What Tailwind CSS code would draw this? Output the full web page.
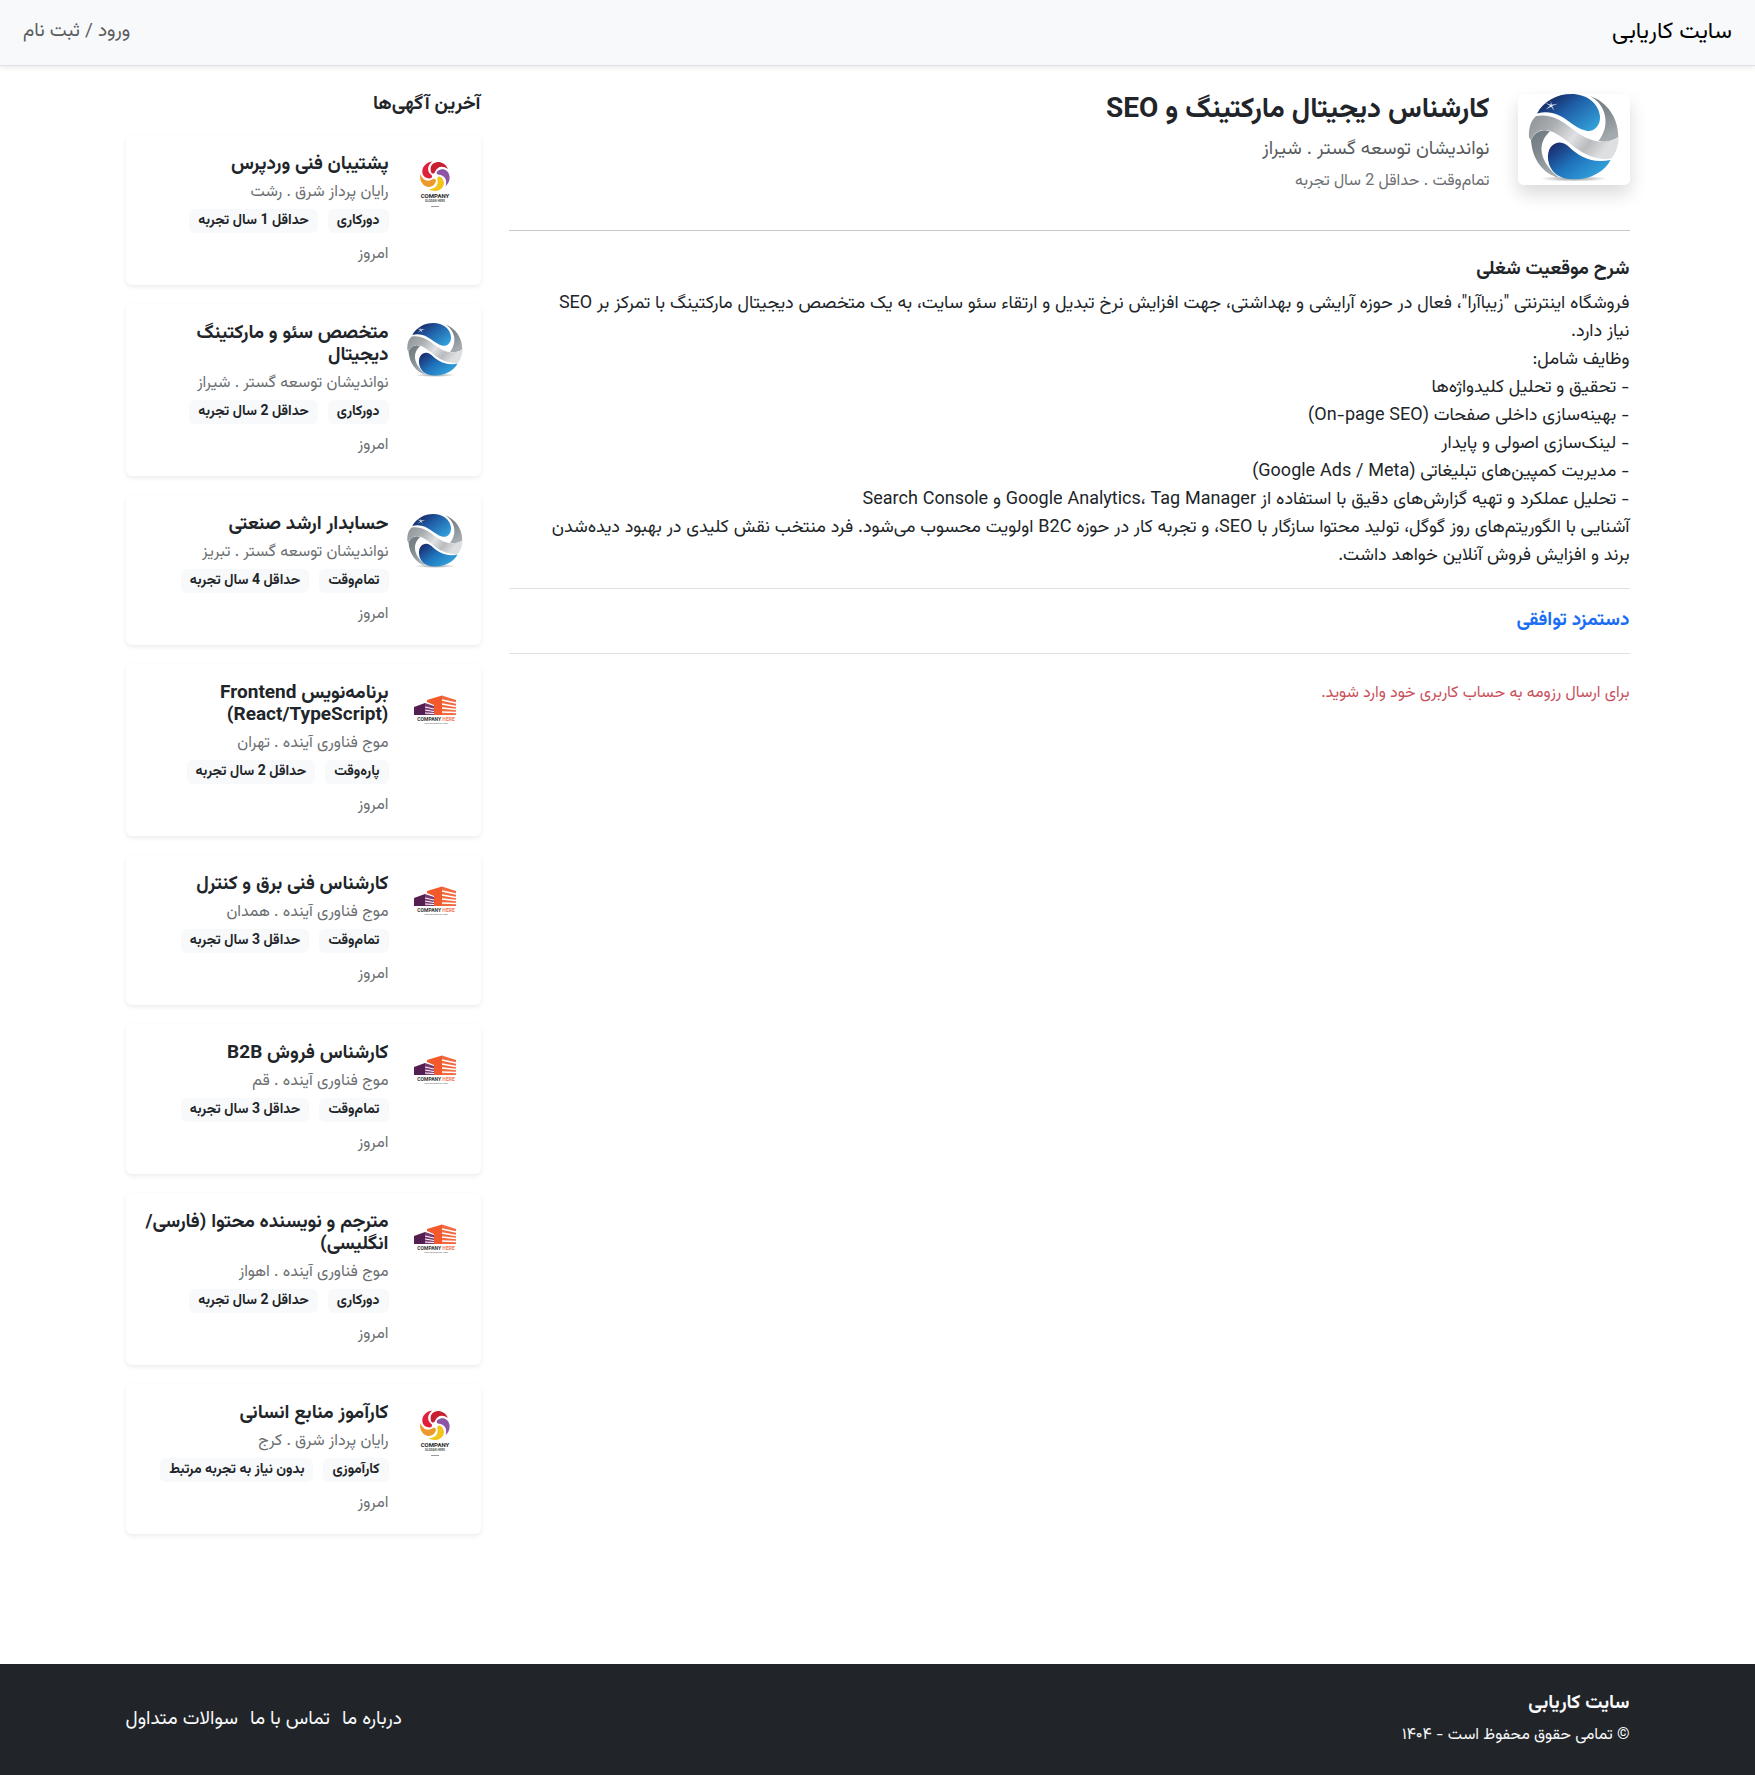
<!DOCTYPE html>
<html lang="fa" dir="rtl">
<head>
<meta charset="utf-8">
<meta name="viewport" content="width=device-width, initial-scale=1">
<title>سایت کاریابی</title>
<script src="https://cdn.jsdelivr.net/npm/@tailwindcss/browser@4"></script>
</head>
<body class="flex min-h-screen flex-col bg-white font-[Vazirmatn,Roboto,'Noto_Sans_Arabic','DejaVu_Sans',sans-serif] text-[19px] leading-7 text-[#212529]">

<svg class="absolute size-0" aria-hidden="true">
  <defs>
    <linearGradient id="blue1" x1="0" y1="0.1" x2="1" y2="0.9"><stop offset="0.1" stop-color="#17265f"/><stop offset="0.45" stop-color="#1f5fa8"/><stop offset="1" stop-color="#35a5dd"/></linearGradient>
    <linearGradient id="blue2" x1="0" y1="0" x2="1" y2="0.8"><stop offset="0.1" stop-color="#1b2f72"/><stop offset="0.5" stop-color="#1f74bc"/><stop offset="1" stop-color="#36a9e1"/></linearGradient>
    <linearGradient id="band" x1="0" y1="0" x2="1" y2="0.4"><stop offset="0" stop-color="#8b9195"/><stop offset="0.3" stop-color="#a9adb0"/><stop offset="0.6" stop-color="#e0e1e3"/><stop offset="0.8" stop-color="#b9bbbe"/><stop offset="1" stop-color="#dedfe1"/></linearGradient>
    <linearGradient id="gray" x1="0" y1="0" x2="0.4" y2="1"><stop offset="0" stop-color="#6f7a80"/><stop offset="0.5" stop-color="#7f898e"/><stop offset="1" stop-color="#a4aaae"/></linearGradient>
    <radialGradient id="floor"><stop offset="0" stop-color="#8f9498"/><stop offset="1" stop-color="#ffffff"/></radialGradient>
    <path id="petal" d="M-4 -4C-7 -15 8 -18 13 -7C7 -11 2 -9 0 -4C-1 -2 -3 -2 -4 -4Z"/>
  </defs>
  <symbol id="globe" viewBox="85 70 335 272" preserveAspectRatio="xMidYMid slice">
    <rect x="85" y="70" width="335" height="272" fill="#fff"/>
    <ellipse cx="252" cy="323" rx="100" ry="9" fill="url(#floor)"/>
    <path d="M300 76C350 92 385 140 385 198C370 212 345 216 326 210C362 165 350 102 300 76Z" fill="url(#gray)"/>
    <path d="M124 208C128 265 160 309 208 320C158 280 134 225 180 182C158 172 136 182 124 208Z" fill="url(#gray)"/>
    <path d="M118 200C116 170 125 148 139 136C175 130 205 142 235 165C275 195 325 235 386 198C386 225 376 250 364 263C320 270 275 248 240 218C205 188 150 150 124 208Z" fill="url(#band)"/>
    <path d="M142 128C162 92 200 70 245 70C290 70 326 98 330 135C333 165 312 184 290 180C240 170 215 110 142 128Z" fill="url(#blue1)"/>
    <path d="M208 215C180 218 168 246 178 280C188 308 210 324 252 325C305 325 345 300 362 267C300 280 262 250 242 232C230 221 220 214 208 215Z" fill="url(#blue2)"/>
    <path d="M183 90L186 102L204 99L187 106L194 120L184 108L168 116L181 105L166 96L183 102Z" fill="#dfeaf8"/>
  </symbol>
</svg>

<template id="swirl">
  <svg class="size-14 shrink-0" aria-hidden="true"><use href="#globe"/></svg>
</template>
<template id="flower">
  <svg class="size-14 shrink-0" viewBox="0 0 56 56" aria-hidden="true">
    <g transform="translate(28 22)">
      <use href="#petal" fill="#c72031"/>
      <use href="#petal" fill="#8c55a5" transform="rotate(72)"/>
      <use href="#petal" fill="#f2c519" transform="rotate(144)"/>
      <use href="#petal" fill="#ec9a2b" transform="rotate(216)"/>
      <use href="#petal" fill="#e01f3d" transform="rotate(288)"/>
    </g>
    <text x="28" y="44" direction="ltr" text-anchor="middle" font-family="Roboto" font-weight="700" font-size="6" fill="#252525">COMPANY</text>
    <text x="28" y="48" direction="ltr" text-anchor="middle" font-family="Roboto" font-weight="700" font-size="3" fill="#555">SLOGAN HERE</text>
    <path d="M24 52.5H32" stroke="#999" stroke-width="1"/>
  </svg>
</template>
<template id="building">
  <svg class="size-14 shrink-0" viewBox="0 0 56 56" aria-hidden="true">
    <path d="M7 24L18 20V32H7Z" fill="#541f50"/>
    <path d="M18 20L27 23V32H18Z" fill="#7b3a70"/>
    <path d="M18 24L27 26M18 27L27 28.500M18 30L27 30.500" stroke="#fff" stroke-width="1"/>
    <path d="M20 17L35 12.500V32H27V22L20 19Z" fill="#f2592c"/>
    <path d="M35 12.500L49 17V32H35Z" fill="#f26a3f"/>
    <path d="M35 17L49 20M35 21L49 23.500M35 25L49 26.500M35 29L49 29.500" stroke="#fff" stroke-width="1.400"/>
    <text x="29" y="38" direction="ltr" text-anchor="middle" font-family="Roboto" font-weight="700" font-size="5" fill="#333">COMPANY <tspan fill="#f2785a">HERE</tspan></text>
    <text x="29" y="41" direction="ltr" text-anchor="middle" font-family="Roboto" font-weight="500" font-size="2" fill="#666">TAGLINE COMPANY HERE</text>
  </svg>
</template>

<header class="border-b border-[#dee2e6] bg-[#f8f9fa] shadow-[0_2px_5px_rgba(0,0,0,0.08)]">
  <nav class="flex h-[65px] items-center justify-between px-[23px] pb-px">
    <a href="#" class="text-[23px] leading-8 text-black">سایت کاریابی</a>
    <a href="#" class="text-[#595c5f]">ورود / ثبت نام</a>
  </nav>
</header>

<div class="mx-auto grid w-full max-w-[1560px] grid-cols-4 gap-7 px-7 pt-7">
  <main class="col-span-3">
    <div class="flex gap-7">
      <svg class="h-[91px] w-[112px] shrink-0 rounded-md shadow-[0_9px_18px_rgba(0,0,0,0.15)]" role="img" aria-label="لوگوی شرکت"><use href="#globe"/></svg>
      <div class="min-w-0">
        <h1 class="mb-[10px] text-[28px] font-bold leading-8">کارشناس دیجیتال مارکتینگ و SEO</h1>
        <p class="mb-1 text-[#595c5f]">نواندیشان توسعه گستر . شیراز</p>
        <p class="text-[16px] text-[#6c6f72]">تمام‌وقت . حداقل 2 سال تجربه</p>
      </div>
    </div>
    <hr class="mb-7 mt-[34px] border-[#c8c9ca]">
    <h2 class="mb-[9px] font-bold leading-[22px]">شرح موقعیت شغلی</h2>
    <p class="text-[18px]">فروشگاه اینترنتی "زیباآرا"، فعال در حوزه آرایشی و بهداشتی، جهت افزایش نرخ تبدیل و ارتقاء سئو سایت، به یک متخصص دیجیتال مارکتینگ با تمرکز بر SEO<br>
    نیاز دارد.<br>
    وظایف شامل:<br>
    - تحقیق و تحلیل کلیدواژه‌ها<br>
    - بهینه‌سازی داخلی صفحات (On-page SEO)<br>
    - لینک‌سازی اصولی و پایدار<br>
    - مدیریت کمپین‌های تبلیغاتی (Google Ads / Meta)<br>
    - تحلیل عملکرد و تهیه گزارش‌های دقیق با استفاده از Google Analytics، Tag Manager و Search Console<br>
    آشنایی با الگوریتم‌های روز گوگل، تولید محتوا سازگار با SEO، و تجربه کار در حوزه B2C اولویت محسوب می‌شود. فرد منتخب نقش کلیدی در بهبود دیده‌شدن<br>
    برند و افزایش فروش آنلاین خواهد داشت.</p>
    <hr class="my-[18px] border-[#dee2e6]">
    <p class="font-bold text-[#1b6ef3]">دستمزد توافقی</p>
    <hr class="mb-[26px] mt-[18px] border-[#dee2e6]">
    <p class="text-[16px] text-[#c8515c]">برای ارسال رزومه به حساب کاربری خود وارد شوید.</p>
  </main>

  <aside>
    <h2 class="mb-[19px] font-bold leading-[22px]">آخرین آگهی‌ها</h2>
    <div id="ads" class="flex flex-col gap-[19px]"></div>
  </aside>
</div>

<footer class="mt-auto bg-[#212529] text-[#f8f9fa]">
  <div class="mx-auto flex h-[111px] w-full max-w-[1560px] items-center justify-between px-7">
    <div>
      <h2 class="mb-2 font-bold leading-6">سایت کاریابی</h2>
      <p class="text-[16px] leading-6">© تمامی حقوق محفوظ است - ۱۴۰۴</p>
    </div>
    <nav class="flex gap-3">
      <a href="#">درباره ما</a>
      <a href="#">تماس با ما</a>
      <a href="#">سوالات متداول</a>
    </nav>
  </div>
</footer>

<template id="ad">
  <a href="#" class="flex gap-[18px] rounded-md bg-white p-[18px] pt-[19px] shadow-[0_2px_5px_rgba(0,0,0,0.08)]">
    <div class="min-w-0 grow">
      <h3 class="mb-[5px] font-bold leading-[22px]"></h3>
      <p class="mb-1 text-[16px] leading-6 text-[#6c6f72]"></p>
      <div class="mb-[10px] flex gap-[10px] text-[14px] font-bold leading-6">
        <span class="rounded-md bg-[#f8f9fa] px-[9px]"></span>
        <span class="rounded-md bg-[#f8f9fa] px-[9px]"></span>
      </div>
      <p class="text-[16px] leading-6 text-[#6c6f72]">امروز</p>
    </div>
  </a>
</template>
<script>
  const ads = [
    ['flower', 'پشتیبان فنی وردپرس', 'رایان پرداز شرق . رشت', 'دورکاری', 'حداقل 1 سال تجربه'],
    ['swirl', 'متخصص سئو و مارکتینگ دیجیتال', 'نواندیشان توسعه گستر . شیراز', 'دورکاری', 'حداقل 2 سال تجربه'],
    ['swirl', 'حسابدار ارشد صنعتی', 'نواندیشان توسعه گستر . تبریز', 'تمام‌وقت', 'حداقل 4 سال تجربه'],
    ['building', 'برنامه‌نویس Frontend (React/TypeScript)', 'موج فناوری آینده . تهران', 'پاره‌وقت', 'حداقل 2 سال تجربه'],
    ['building', 'کارشناس فنی برق و کنترل', 'موج فناوری آینده . همدان', 'تمام‌وقت', 'حداقل 3 سال تجربه'],
    ['building', 'کارشناس فروش B2B', 'موج فناوری آینده . قم', 'تمام‌وقت', 'حداقل 3 سال تجربه'],
    ['building', 'مترجم و نویسنده محتوا (فارسی/انگلیسی)', 'موج فناوری آینده . اهواز', 'دورکاری', 'حداقل 2 سال تجربه'],
    ['flower', 'کارآموز منابع انسانی', 'رایان پرداز شرق . کرج', 'کارآموزی', 'بدون نیاز به تجربه مرتبط']
  ];
  const copy = id => document.getElementById(id).content.cloneNode(true);
  for (const [logo, title, company, type, experience] of ads) {
    const card = copy('ad');
    card.querySelector('a').prepend(copy(logo));
    card.querySelector('h3').textContent = title;
    card.querySelector('p').textContent = company;
    const tags = card.querySelectorAll('span');
    tags[0].textContent = type;
    tags[1].textContent = experience;
    document.getElementById('ads').append(card);
  }
</script>
</body>
</html>
